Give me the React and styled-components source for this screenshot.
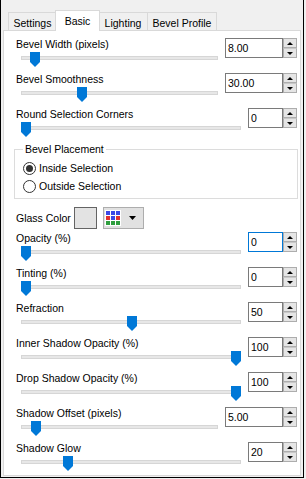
import React from 'react';
import styled, { createGlobalStyle, css } from 'styled-components';

const Global = createGlobalStyle`
  html, body { margin: 0; padding: 0; background: #f0f0f0; }
  body {
    font-family: "Liberation Sans", Arial, sans-serif;
    font-size: 10.5px;
    color: #000;
  }
  #root { width: 306px; height: 479px; }
`;

const Frame = styled.div`
  box-sizing: border-box;
  width: 304px;
  height: 478px;
  border-left: 1px solid #000;
  border-right: 1px solid #000;
  border-bottom: 1px solid #000;
  padding: 0 2px 1px 2px;
  display: flex;
  flex-direction: column;
  background: #f0f0f0;
`;

const TabStrip = styled.div`
  height: 30px;
  flex: none;
  display: flex;
  align-items: flex-end;
  padding-left: 5px;
`;

const Tab = styled.div`
  box-sizing: border-box;
  width: ${p => p.$w}px;
  margin-left: ${p => p.$ml || 0}px;
  height: 18px;
  padding-top: 2px;
  border: 1px solid #d9d9d9;
  border-bottom: none;
  background: #f0f0f0;
  display: flex;
  align-items: center;
  justify-content: center;
  white-space: nowrap;
  line-height: 14px;
  ${p => p.$active && css`
    height: 21px;
    padding-top: 0;
    margin-bottom: -1px;
    background: #fff;
    position: relative;
    z-index: 2;
  `}
`;

const Panel = styled.div`
  flex: 1;
  box-sizing: border-box;
  background: #fff;
  border: 1px solid #d9d9d9;
  padding-top: 6px;
  overflow: hidden;
`;

const Row = styled.div`
  display: grid;
  grid-template-columns: 1fr auto;
  grid-template-rows: 14px 21px;
  column-gap: 7px;
  padding: 0 3px 0 12px;
`;

const Label = styled.div`
  grid-column: 1;
  grid-row: 1;
  line-height: 14px;
  white-space: nowrap;
`;

const Slider = styled.div`
  grid-column: 1;
  grid-row: 2;
  position: relative;
  margin-left: 5px;
`;

const Track = styled.div`
  position: absolute;
  left: 0;
  right: 0;
  top: 5px;
  height: 4px;
  box-sizing: border-box;
  background: #e7e7e7;
  border: 1px solid #d6d6d6;
`;

const Thumb = styled.svg`
  position: absolute;
  top: 1px;
  width: 10px;
  height: 15px;
  display: block;
`;

const Spin = styled.div`
  grid-column: 2;
  grid-row: 1 / 3;
  align-self: start;
  margin-top: 1px;
  display: flex;
  height: 20px;
`;

const SpinText = styled.div`
  box-sizing: border-box;
  width: ${p => (p.$wide ? 58 : 35)}px;
  height: 20px;
  border: 1px solid ${p => (p.$focus ? '#0078d7' : '#7a7a7a')};
  padding-left: 2px;
  line-height: 18px;
  background: #fff;
`;

const SpinButtons = styled.div`
  width: 14px;
  height: 20px;
  display: flex;
  flex-direction: column;
`;

const SpinBtn = styled.div`
  box-sizing: border-box;
  height: 10px;
  border: 1px solid #adadad;
  background: #e5e5e5;
  display: flex;
  align-items: center;
  justify-content: center;
  & + & { border-top-color: #c8c8c8; }
  &::after {
    content: '';
    width: 0;
    height: 0;
    border-left: 3px solid transparent;
    border-right: 3px solid transparent;
    ${p => (p.$down
      ? css`border-top: 3px solid #000;`
      : css`border-bottom: 3px solid #000;`)}
  }
`;

const Group = styled.fieldset`
  font: inherit;
  box-sizing: border-box;
  min-width: 0;
  margin: 0 2px 0 10px;
  padding: 3px 8px 3px 8px;
  border: 1px solid #dcdcdc;
`;

const Legend = styled.legend`
  font: inherit;
  padding: 0 2px;
  line-height: 14px;
`;

const RadioRow = styled.label`
  display: flex;
  align-items: center;
  height: 18px;
  gap: 3px;
  line-height: 14px;
`;

const RadioCircle = styled.span`
  box-sizing: border-box;
  width: 13px;
  height: 13px;
  border-radius: 50%;
  border: 1px solid #333;
  background: #fff;
  display: flex;
  align-items: center;
  justify-content: center;
  &::after {
    content: '';
    width: 7px;
    height: 7px;
    border-radius: 50%;
    background: ${p => (p.$on ? '#333' : 'transparent')};
  }
`;

const ColorRow = styled.div`
  display: flex;
  align-items: center;
  height: 22px;
  margin: 8px 0 2px;
  padding-left: 12px;
`;

const ColorLabel = styled.div`
  width: 58px;
  line-height: 14px;
  white-space: nowrap;
`;

const Swatch = styled.div`
  box-sizing: border-box;
  width: 23px;
  height: 22px;
  border: 1px solid #646464;
  background: #e3e3e3;
`;

const PaletteButton = styled.div`
  box-sizing: border-box;
  width: 41px;
  height: 22px;
  margin-left: 6px;
  border: 1px solid #adadad;
  background: #e1e1e1;
  display: flex;
  align-items: center;
  padding-left: 1px;
  gap: 8px;
`;

const Palette = styled.div`
  display: grid;
  grid-template-columns: repeat(3, 4px);
  grid-template-rows: repeat(3, 4px);
  gap: 1px;
  padding: 1px;
  background: #fff;
`;

const Cell = styled.span`
  background: ${p => p.$c};
`;

const Caret = styled.svg`
  width: 7px;
  height: 4px;
  display: block;
`;

const topRows = [
  { label: 'Bevel Width (pixels)', value: '8.00', wide: true, x: 9 },
  { label: 'Bevel Smoothness', value: '30.00', wide: true, x: 56 },
  { label: 'Round Selection Corners', value: '0', x: 0 },
];

const bottomRows = [
  { label: 'Opacity (%)', value: '0', x: 0, focus: true },
  { label: 'Tinting (%)', value: '0', x: 0 },
  { label: 'Refraction', value: '50', x: 106 },
  { label: 'Inner Shadow Opacity (%)', value: '100', x: 210 },
  { label: 'Drop Shadow Opacity (%)', value: '100', x: 210 },
  { label: 'Shadow Offset (pixels)', value: '5.00', wide: true, x: 10 },
  { label: 'Shadow Glow', value: '20', x: 42 },
];

const paletteColors = [
  '#3b48e6', '#3b48e6', '#3b48e6',
  '#e03030', '#3b48e6', '#e03030',
  '#2e9e3e', '#2e9e3e', '#2e9e3e',
];

function SliderRow({ label, value, wide, x, focus }) {
  return (
    <Row>
      <Label>{label}</Label>
      <Slider>
        <Track />
        <Thumb viewBox="0 0 10 15" style={{ left: x }}>
          <polygon points="0,0 10,0 10,10 5,15 0,10" fill="#0078d7" />
        </Thumb>
      </Slider>
      <Spin>
        <SpinText $wide={wide} $focus={focus}>{value}</SpinText>
        <SpinButtons>
          <SpinBtn />
          <SpinBtn $down />
        </SpinButtons>
      </Spin>
    </Row>
  );
}

export default function App() {
  return (
    <>
      <Global />
      <Frame>
        <TabStrip>
          <Tab $w={49}>Settings</Tab>
          <Tab $w={45} $ml={-2} $active>Basic</Tab>
          <Tab $w={50} $ml={-2}>Lighting</Tab>
          <Tab $w={70} $ml={-1}>Bevel Profile</Tab>
        </TabStrip>
        <Panel>
          {topRows.map(r => <SliderRow key={r.label} {...r} />)}
          <Group>
            <Legend>Bevel Placement</Legend>
            <RadioRow><RadioCircle $on />Inside Selection</RadioRow>
            <RadioRow><RadioCircle />Outside Selection</RadioRow>
          </Group>
          <ColorRow>
            <ColorLabel>Glass Color</ColorLabel>
            <Swatch />
            <PaletteButton>
              <Palette>
                {paletteColors.map((c, i) => <Cell key={i} $c={c} />)}
              </Palette>
              <Caret viewBox="0 0 7 4">
                <polygon points="0,0 7,0 3.5,4" fill="#000" />
              </Caret>
            </PaletteButton>
          </ColorRow>
          {bottomRows.map(r => <SliderRow key={r.label} {...r} />)}
        </Panel>
      </Frame>
    </>
  );
}
